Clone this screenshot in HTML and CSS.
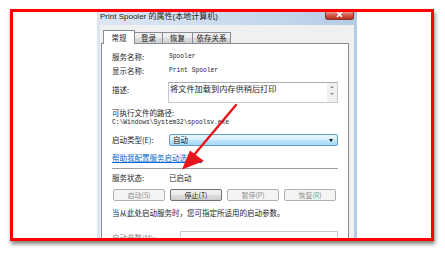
FILE: index.html
```html
<!DOCTYPE html>
<html>
<head>
<meta charset="utf-8">
<link rel="stylesheet" href="styles.css">
</head>
<body>
<div class="shot">
  <div class="dialog">
    <div class="titlebar">
      <span class="title">Print Spooler 的属性(本地计算机)</span>
      <span class="close"><svg width="9" height="6" viewBox="0 0 9 6"><path d="M2 0 L7 5 M7 0 L2 5" stroke="#fff" stroke-width="1.6"/></svg></span>
    </div>
    <div class="client">
      <div class="tabs">
        <div class="tab active">常规</div>
        <div class="tab w28">登录</div>
        <div class="tab w30">恢复</div>
        <div class="tab w38">依存关系</div>
      </div>
      <div class="panel">
        <div class="row r1"><span class="lbl">服务名称:</span><span class="mono">Spooler</span></div>
        <div class="row r2"><span class="lbl">显示名称:</span><span class="mono">Print Spooler</span></div>
        <div class="desc-row">
          <span class="lbl desc-lbl">描述:</span>
          <div class="descbox">
            <span class="desc-text">将文件加载到内存供稍后打印</span>
            <div class="scroll"><span class="up"></span><span class="down"></span></div>
          </div>
        </div>
        <div class="row exe">可执行文件的路径:</div>
        <div class="path">C:\Windows\System32\spoolsv.exe</div>
        <div class="type-row">
          <span class="lbl">启动类型(E):</span>
          <div class="combo"><span>自动</span><span class="caret"></span></div>
        </div>
        <div class="row link-row"><span class="link">帮助我配置服务启动选项。</span></div>
        <div class="sep"></div>
        <div class="row status"><span class="lbl">服务状态:</span><span>已启动</span></div>
        <div class="buttons">
          <span class="btn off">启动(S)</span>
          <span class="btn">停止(T)</span>
          <span class="btn off">暂停(P)</span>
          <span class="btn off">恢复(R)</span>
        </div>
        <div class="row hint">当从此处启动服务时，您可指定所适用的启动参数。</div>
        <div class="params">
          <span class="plbl">启动参数(M):</span>
          <div class="pinput"></div>
        </div>
      </div>
    </div>
  </div>
</div>
<svg class="arrow" width="445" height="253" viewBox="0 0 445 253">
  <line x1="236" y1="105" x2="194" y2="155" stroke="#e8161c" stroke-width="2.4" stroke-linecap="round"/>
  <polygon points="182,169.5 190,150.5 204,161" fill="#e8161c"/>
</svg>
</body>
</html>
```
FILE: styles.css
```css
html, body {
  margin: 0;
  padding: 0;
}
body {
  width: 445px;
  height: 253px;
  background: #fff;
  overflow: hidden;
  position: relative;
  padding-top: 9px;
  box-sizing: border-box;
  font-family: "Noto Sans CJK SC", sans-serif;
}
.shot {
  box-sizing: border-box;
  margin-left: 10px;
  width: 424px;
  height: 232px;
  border: 3px solid #ff0000;
  overflow: hidden;
  padding-left: 84px;
  display: flex;
  background: #fff;
  box-shadow: 1px 3px 4px rgba(0, 0, 0, 0.5);
}
.dialog {
  width: 260px;
  height: 240px;
  flex-shrink: 0;
  box-sizing: border-box;
  padding: 0 3px;
  display: flex;
  flex-direction: column;
  background: linear-gradient(to right, #dde7f3, #c7d9ee 60%, #b4cbe5);
}
.titlebar {
  height: 13px;
  display: flex;
  justify-content: space-between;
  align-items: flex-start;
}
.title {
  font: 8px/10px "Liberation Sans", "Noto Sans CJK SC", sans-serif;
  color: #1c1c1c;
  white-space: nowrap;
}
.close {
  width: 29px;
  height: 8px;
  box-sizing: border-box;
  background: linear-gradient(#e39a8e, #cf4f40 55%, #b7301f);
  border: 1px solid #8a3026;
  border-top: none;
  border-radius: 0 0 3px 3px;
  display: flex;
  justify-content: center;
  align-items: flex-start;
}
.client {
  flex: 1;
  background: #f0f0f0;
  padding: 5px 5px 0 1px;
}
.tabs {
  display: flex;
  align-items: flex-end;
  height: 14px;
  padding-left: 2px;
  margin-bottom: -1px;
  position: relative;
  z-index: 1;
}
.tab {
  box-sizing: border-box;
  height: 11px;
  margin-bottom: 1px;
  border: 1px solid #898c95;
  border-bottom: none;
  border-left: none;
  background: linear-gradient(#f2f2f2, #ebebeb 50%, #dddddd 51%, #cfcfcf);
  font-size: 7.5px;
  line-height: 10px;
  text-align: center;
  color: #1a1a1a;
}
.tab.active {
  width: 32px;
  height: 14px;
  margin-bottom: 0;
  background: #fff;
  border-left: 1px solid #898c95;
  line-height: 13px;
}
.w28 { width: 28px; }
.w30 { width: 30px; }
.w38 { width: 38px; }
.panel {
  box-sizing: border-box;
  width: 248px;
  height: 200px;
  background: #fff;
  border: 1px solid #898c95;
  padding: 0 10px;
  font-size: 7.5px;
  color: #1e1e1e;
  overflow: hidden;
}
.row {
  display: flex;
  height: 10px;
  line-height: 10px;
  white-space: nowrap;
}
.lbl {
  width: 57px;
  flex-shrink: 0;
}
.mono {
  font-family: "Liberation Mono", monospace;
  font-size: 6.3px;
}
.r1 { margin-top: 8px; }
.r2 { margin-top: 4px; }
.desc-row {
  display: flex;
  margin-top: 6px;
  height: 21px;
}
.desc-lbl {
  width: 56px;
  padding-top: 3px;
  line-height: 10px;
}
.descbox {
  flex: 1;
  box-sizing: border-box;
  border: 1px solid #c5c8cf;
  border-top-color: #a9acb4;
  display: flex;
  justify-content: space-between;
}
.desc-text {
  font-size: 8.2px;
  line-height: 10px;
  padding: 0 0 0 1px;
  white-space: nowrap;
}
.scroll {
  width: 10px;
  background: #f0f0f0;
  display: flex;
  flex-direction: column;
  align-items: center;
  gap: 5px;
  padding-top: 3px;
}
.up, .down {
  width: 0;
  height: 0;
  border-left: 2px solid transparent;
  border-right: 2px solid transparent;
}
.up { border-bottom: 2px solid #8c8c8c; }
.down { border-top: 2px solid #8c8c8c; }
.exe { margin-top: 5px; }
.path {
  height: 9px;
  line-height: 9px;
  font-family: "Liberation Mono", monospace;
  font-size: 6.3px;
  white-space: nowrap;
}
.type-row {
  display: flex;
  margin-top: 7px;
  height: 12px;
  line-height: 12px;
}
.combo {
  flex: 1;
  box-sizing: border-box;
  border: 1px solid #5e9ed0;
  border-radius: 2px;
  background: linear-gradient(#eaf6fd, #d9f0fc 50%, #bee6fd 51%, #a7d9f5);
  display: flex;
  justify-content: space-between;
  align-items: center;
  padding: 0 4px 0 3px;
  line-height: 10px;
}
.caret {
  width: 0;
  height: 0;
  border-left: 2.5px solid transparent;
  border-right: 2.5px solid transparent;
  border-top: 3px solid #1a1a1a;
}
.link-row { margin-top: 7px; }
.link {
  color: #0066cc;
  text-decoration: underline;
}
.sep {
  margin-top: 5px;
  height: 1px;
  background: #a0a0a0;
  border-bottom: 1px solid #fff;
}
.status { margin-top: 3px; }
.buttons {
  display: flex;
  gap: 5px;
  margin-top: 6px;
  padding-left: 1px;
}
.btn {
  box-sizing: border-box;
  width: 52px;
  height: 12px;
  border: 1px solid #707070;
  border-radius: 2px;
  background: linear-gradient(#f2f2f2, #ebebeb 50%, #dddddd 51%, #cfcfcf);
  text-align: center;
  line-height: 10px;
  font-size: 7px;
  color: #1a1a1a;
}
.btn.off {
  border-color: #adb2b5;
  background: #f4f4f4;
  color: #8d8d8d;
}
.hint { margin-top: 7px; }
.params {
  display: flex;
  margin-top: 13px;
}
.plbl {
  width: 68px;
  padding-top: 2px;
  line-height: 10px;
  color: #8a8a8a;
}
.pinput {
  flex: 1;
  height: 14px;
  box-sizing: border-box;
  border: 1px solid #c5c8cf;
  background: #fff;
}
.arrow {
  position: absolute;
  left: 0;
  top: 0;
  pointer-events: none;
}
```
